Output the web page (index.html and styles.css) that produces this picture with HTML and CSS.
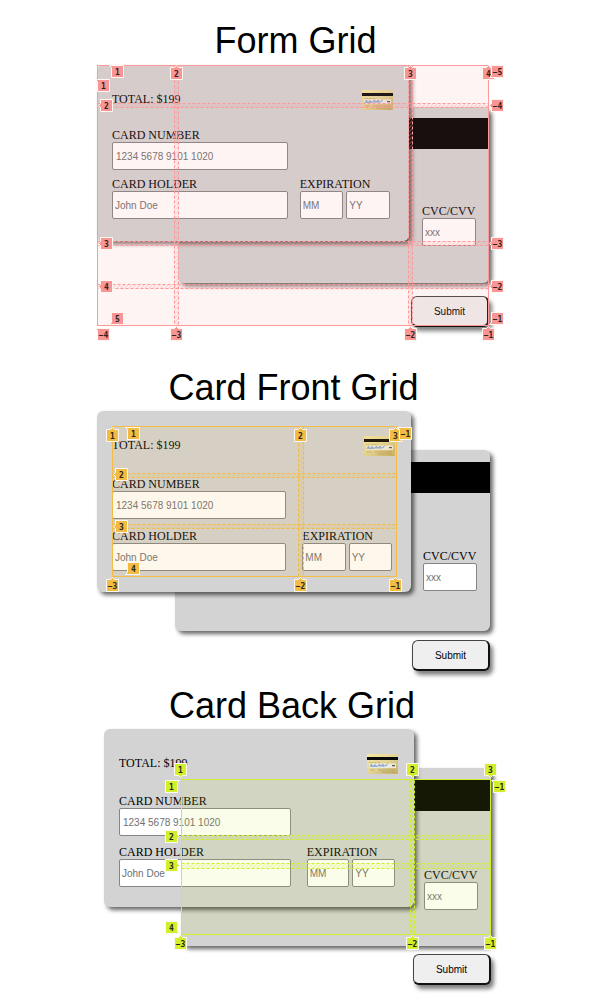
FILE: index.html
```html
<!DOCTYPE html>
<html lang="en">
<head>
<meta charset="utf-8">
<meta name="viewport" content="width=device-width, initial-scale=1">
<title>Credit card form grids</title>
<link rel="stylesheet" href="styles.css">
</head>
<body>
<svg class="defs" width="0" height="0" aria-hidden="true">
  <defs>
    <path id="tag-up" d="M-6-6H-2L0-8L2-6H6V6H-6Z"/>
    <path id="tag-down" d="M-6-6H6V6H2L0 8L-2 6H-6Z"/>
    <path id="tag-left" d="M-6-6H6V6H-6V2L-8 0L-6-2Z"/>
    <path id="tag-right" d="M-6-6H6V-2L8 0L6 2V6H-6Z"/>
    <path id="tag-tl" d="M-8-6H6V6H-6V-4Z"/>
    <path id="tag-bl" d="M-6-6H6V6H-8L-6 4Z"/>
    <path id="tag-tr" d="M-6-6H8L6-4V6H-6Z"/>
    <path id="tag-br" d="M-6-6H6V4L8 6H-6Z"/>
    <linearGradient id="gold" x1="0" y1="0" x2="1" y2="1">
      <stop offset="0" stop-color="#f5e79d"/>
      <stop offset=".5" stop-color="#e3d498"/>
      <stop offset="1" stop-color="#c4ad62"/>
    </linearGradient>
    <symbol id="card-icon" viewBox="0 0 31 20">
      <rect width="31" height="20" rx="1" fill="url(#gold)"/>
      <rect y="3" width="31" height="3" fill="#0a0a08"/>
      <path d="M2 8.500H14" stroke="#a99a66" stroke-width=".6" stroke-dasharray="1 .5"/>
      <rect x="2" y="9.500" width="27" height="4.500" fill="#eceade"/>
      <path d="M3 13l1.500-3 .5 3 1-1.500 1 1.500 1-2.500 1 2.500 1-1.500 1 1 1.500-2.500.5 2.500 1-1.500 1 1.500 1-2.500.5 2.500 1.500-1 1 .5 1.500-2.500" fill="none" stroke="#6f8fce" stroke-width=".8"/>
      <path d="M25 11.700h3" stroke="#333" stroke-width="1"/>
      <path d="M3 16h5M11 16h17M14 18h14" stroke="#ab9654" stroke-width=".8" stroke-dasharray="1.500 .7"/>
    </symbol>
    <pattern id="hatch-red" width="4" height="4" patternUnits="userSpaceOnUse"><path d="M0 4L4 0" stroke="#f99" stroke-opacity=".7"/></pattern>
    <pattern id="hatch-orange" width="4" height="4" patternUnits="userSpaceOnUse"><path d="M0 4L4 0" stroke="#f3bd45" stroke-opacity=".7"/></pattern>
    <pattern id="hatch-lime" width="4" height="4" patternUnits="userSpaceOnUse"><path d="M0 4L4 0" stroke="#d0ee2c" stroke-opacity=".7"/></pattern>
  </defs>
</svg>

<main class="page">
  <section class="demo demo-form">
    <h2 class="title">Form Grid</h2>
    <div class="stage">
      <form class="payment">
        <div class="card back">
          <div class="stripe"></div>
          <div class="field cvc"><label for="cvc1">CVC/CVV</label><input id="cvc1" type="text" placeholder="xxx"></div>
        </div>
        <div class="card front">
          <div class="header"><span>TOTAL: $199</span><svg class="icon"><use href="#card-icon"/></svg></div>
          <div class="field number"><label for="num1">CARD NUMBER</label><input id="num1" type="text" placeholder="1234 5678 9101 1020"></div>
          <div class="field"><label for="name1">CARD HOLDER</label><input id="name1" type="text" placeholder="John Doe"></div>
          <div class="field"><label for="mm1">EXPIRATION</label><div class="dates"><input id="mm1" type="text" placeholder="MM"><input aria-label="Expiration year" type="text" placeholder="YY"></div></div>
        </div>
        <button class="submit" type="button">Submit</button>
      </form>
      <svg class="overlay red" viewBox="96.5 64.5 392 262" preserveAspectRatio="none">
        <rect class="area" x="97" y="65" width="391" height="260"/>
        <g fill="url(#hatch-red)" class="gaps">
          <rect x="174" y="65" width="4" height="260"/><rect x="408" y="65" width="4" height="260"/>
          <rect x="97" y="103" width="391" height="4"/><rect x="97" y="241" width="391" height="4"/><rect x="97" y="284" width="391" height="4"/>
        </g>
        <g class="tags">
          <use href="#tag-tl" x="117" y="71"/><text x="117" y="74">1</text>
          <use href="#tag-tl" x="103" y="85"/><text x="103" y="88">1</text>
          <use href="#tag-up" x="176" y="73"/><text x="176" y="76">2</text>
          <use href="#tag-up" x="410" y="73"/><text x="410" y="76">3</text>
          <use href="#tag-up" x="488" y="73"/><text x="488" y="76">4</text>
          <use href="#tag-bl" x="497" y="71"/><text x="497" y="74">−5</text>
          <use href="#tag-left" x="106" y="105"/><text x="106" y="108">2</text>
          <use href="#tag-left" x="497" y="105"/><text x="497" y="108">−4</text>
          <use href="#tag-left" x="106" y="243"/><text x="106" y="246">3</text>
          <use href="#tag-left" x="497" y="243"/><text x="497" y="246">−3</text>
          <use href="#tag-left" x="106" y="286"/><text x="106" y="289">4</text>
          <use href="#tag-left" x="497" y="286"/><text x="497" y="289">−2</text>
          <use href="#tag-bl" x="117" y="318"/><text x="117" y="321">5</text>
          <use href="#tag-bl" x="497" y="318"/><text x="497" y="321">−1</text>
          <use href="#tag-tl" x="103" y="334"/><text x="103" y="337">−4</text>
          <use href="#tag-up" x="176" y="334"/><text x="176" y="337">−3</text>
          <use href="#tag-up" x="410" y="334"/><text x="410" y="337">−2</text>
          <use href="#tag-up" x="488" y="334"/><text x="488" y="337">−1</text>
        </g>
      </svg>
    </div>
  </section>

  <section class="demo demo-front">
    <h2 class="title">Card Front Grid</h2>
    <div class="stage">
      <form class="payment">
        <div class="card back">
          <div class="stripe"></div>
          <div class="field cvc"><label for="cvc2">CVC/CVV</label><input id="cvc2" type="text" placeholder="xxx"></div>
        </div>
        <div class="card front">
          <div class="header"><span>TOTAL: $199</span><svg class="icon"><use href="#card-icon"/></svg></div>
          <div class="field number"><label for="num2">CARD NUMBER</label><input id="num2" type="text" placeholder="1234 5678 9101 1020"></div>
          <div class="field"><label for="name2">CARD HOLDER</label><input id="name2" type="text" placeholder="John Doe"></div>
          <div class="field"><label for="mm2">EXPIRATION</label><div class="dates"><input id="mm2" type="text" placeholder="MM"><input aria-label="Expiration year" type="text" placeholder="YY"></div></div>
        </div>
        <button class="submit" type="button">Submit</button>
      </form>
      <svg class="overlay orange" viewBox="96.5 410.5 393 260" preserveAspectRatio="none">
        <rect class="area" x="112" y="426" width="284" height="150"/>
        <g fill="url(#hatch-orange)" class="gaps">
          <rect x="298" y="426" width="5" height="150"/>
          <rect x="112" y="473" width="284" height="4"/><rect x="112" y="524" width="284" height="4"/>
        </g>
        <g class="tags">
          <use href="#tag-up" x="112" y="435"/><text x="112" y="438">1</text>
          <use href="#tag-tl" x="133" y="433"/><text x="133" y="436">1</text>
          <use href="#tag-up" x="300" y="435"/><text x="300" y="438">2</text>
          <use href="#tag-up" x="395" y="435"/><text x="395" y="438">3</text>
          <use href="#tag-tl" x="405" y="433"/><text x="405" y="436">−1</text>
          <use href="#tag-left" x="121" y="474"/><text x="121" y="477">2</text>
          <use href="#tag-left" x="121" y="526"/><text x="121" y="529">3</text>
          <use href="#tag-bl" x="133" y="568"/><text x="133" y="571">4</text>
          <use href="#tag-up" x="112" y="585"/><text x="112" y="588">−3</text>
          <use href="#tag-up" x="300" y="585"/><text x="300" y="588">−2</text>
          <use href="#tag-up" x="395" y="585"/><text x="395" y="588">−1</text>
        </g>
      </svg>
    </div>
  </section>

  <section class="demo demo-back">
    <h2 class="title">Card Back Grid</h2>
    <div class="stage">
      <form class="payment">
        <div class="card back">
          <div class="stripe"></div>
          <div class="field cvc"><label for="cvc3">CVC/CVV</label><input id="cvc3" type="text" placeholder="xxx"></div>
        </div>
        <div class="card front">
          <div class="header"><span>TOTAL: $199</span><svg class="icon"><use href="#card-icon"/></svg></div>
          <div class="field number"><label for="num3">CARD NUMBER</label><input id="num3" type="text" placeholder="1234 5678 9101 1020"></div>
          <div class="field"><label for="name3">CARD HOLDER</label><input id="name3" type="text" placeholder="John Doe"></div>
          <div class="field"><label for="mm3">EXPIRATION</label><div class="dates"><input id="mm3" type="text" placeholder="MM"><input aria-label="Expiration year" type="text" placeholder="YY"></div></div>
        </div>
        <button class="submit" type="button">Submit</button>
      </form>
      <svg class="overlay lime" viewBox="103.5 728.5 387 256" preserveAspectRatio="none">
        <rect class="area" x="181" y="779" width="309" height="155"/>
        <g fill="url(#hatch-lime)" class="gaps">
          <rect x="410" y="779" width="4" height="155"/>
          <rect x="181" y="835" width="309" height="4"/><rect x="181" y="863" width="309" height="5"/>
        </g>
        <g class="tags">
          <use href="#tag-down" x="180" y="769"/><text x="180" y="772">1</text>
          <use href="#tag-tr" x="171" y="786"/><text x="171" y="789">1</text>
          <use href="#tag-down" x="412" y="769"/><text x="412" y="772">2</text>
          <use href="#tag-down" x="490" y="769"/><text x="490" y="772">3</text>
          <use href="#tag-tl" x="499" y="786"/><text x="499" y="789">−1</text>
          <use href="#tag-right" x="171" y="836"/><text x="171" y="839">2</text>
          <use href="#tag-right" x="171" y="865"/><text x="171" y="868">3</text>
          <use href="#tag-br" x="171" y="927"/><text x="171" y="930">4</text>
          <use href="#tag-up" x="180" y="943"/><text x="180" y="946">−3</text>
          <use href="#tag-up" x="412" y="943"/><text x="412" y="946">−2</text>
          <use href="#tag-up" x="490" y="943"/><text x="490" y="946">−1</text>
        </g>
      </svg>
    </div>
  </section>
</main>
</body>
</html>
```
FILE: styles.css
```css
* { box-sizing: border-box; }

body {
  margin: 0;
  background: #fff;
  color: #000;
  font-family: "Liberation Serif", "Times New Roman", serif;
  font-size: 12px;
}

.defs { position: absolute; }

.page { padding: 21px 110px 15px 97px; }

.title {
  margin: 0 0 3px;
  font: 400 36px/40px "Liberation Sans", Arial, sans-serif;
  text-align: center;
}

.stage { position: relative; }

/* Outer grid: the two cards overlap in the middle cells */
.payment {
  display: grid;
  gap: 4px;
  margin: 0;
}

.demo-form { margin-bottom: 41px; --header-gap: 19px; --field-gap: 7px; --col-gap: 12px; --cvc-gap: 55px; --back-top: 11px; }
.demo-form .title { margin-bottom: 4px; padding-left: 4px; }
.demo-form .stage { margin-right: 1px; }
.demo-form .payment { grid-template: 38px 134px 38px 40px / minmax(0, 77fr) minmax(0, 231fr) minmax(0, 76fr); }

.demo-front { margin-bottom: 15px; --header-gap: 22px; --field-gap: 10px; --col-gap: 16px; --cvc-gap: 56px; --back-top: 12px; }
.demo-front .payment { grid-template: 35px 142px 35px 36px / minmax(0, 74fr) minmax(0, 236fr) minmax(0, 75fr); }

.demo-back { --header-gap: 21px; --field-gap: 9px; --col-gap: 16px; --cvc-gap: 57px; --back-top: 12px; }
.demo-back .title { padding-right: 3px; }
.demo-back .stage { margin-left: 7px; margin-right: -1px; }
.demo-back .payment { grid-template: 35px 139px 35px 35px / minmax(0, 73fr) minmax(0, 233fr) minmax(0, 73fr); }

.card {
  border-radius: 6px;
  background: #d3d3d3;
  box-shadow: 3px 3px 4px rgba(0, 0, 0, .6);
}

.back {
  grid-area: 2 / 2 / 4 / 4;
  padding-top: var(--back-top);
}

.front {
  grid-area: 1 / 1 / 3 / 3;
  display: grid;
  grid-template-columns: 175fr 93fr;
  column-gap: var(--col-gap);
  align-content: start;
  padding: 25px 16px 0 15px;
}

.header {
  grid-column: 1 / 3;
  display: flex;
  justify-content: space-between;
  align-items: center;
  height: 19px;
  margin-bottom: var(--header-gap);
}

.icon { width: 31px; height: 20px; }

.field {
  display: flex;
  flex-direction: column;
  min-width: 0;
  line-height: 14px;
  white-space: nowrap;
}

.number { grid-column: 1; margin-bottom: var(--field-gap); }
.number + .field { grid-column: 1; }

.dates { display: flex; gap: 3px; padding-right: 3px; }

input {
  width: 100%;
  min-width: 0;
  height: 28px;
  margin: 0;
  padding: 0 2px;
  border: 1px solid #858585;
  border-radius: 2px;
  background: #fff;
  font: 10px "Liberation Sans", Arial, sans-serif;
}

input::placeholder { color: #707070; }

.number input { padding: 0 3px; }

.stripe { height: 31px; background: #000; }

.cvc {
  width: 54px;
  margin: var(--cvc-gap) 13px 0 auto;
}

.submit {
  grid-area: 4 / 3;
  place-self: end;
  width: 78px;
  height: 31px;
  padding: 0;
  border: 2px solid #111;
  border-top: 1px solid #444;
  border-left: 1px solid #444;
  border-radius: 6px;
  background: #efefef;
  box-shadow: 3px 4px 4px rgba(0, 0, 0, .5);
  color: #000;
  font: 10px "Liberation Sans", Arial, sans-serif;
}

/* Grid inspector drawn over each form */
.overlay {
  position: absolute;
  inset: 0;
  width: 100%;
  height: 100%;
  overflow: visible;
  pointer-events: none;
}

.red { --line: #f99; --tag: #f99595; --tint: rgba(248, 143, 143, .1); }
.orange { --line: #f3bd45; --tag: #f2bb42; --tint: rgba(245, 190, 70, .1); }
.lime { --line: #d0ee2c; --tag: #d2ef2b; --tint: rgba(210, 235, 50, .1); }

.area { fill: var(--tint); stroke: var(--line); }
.gaps rect { stroke: var(--line); stroke-width: 1; stroke-dasharray: 3 2; }
.tags use { fill: var(--tag); stroke: #fff8f0; stroke-width: 1; }
.tags text {
  fill: #2b2420;
  font: 700 8px "DejaVu Sans Mono", monospace;
  text-anchor: middle;
}
```
